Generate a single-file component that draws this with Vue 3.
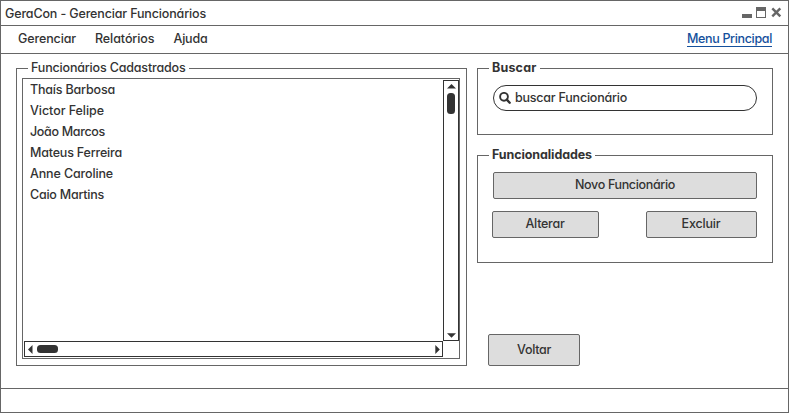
<script setup>
const menus = [
  { label: 'Gerenciar', width: 58 },
  { label: 'Relatórios', width: 59.5 },
  { label: 'Ajuda', width: 34 },
]
const employees = [
  { name: 'Thaís Barbosa', width: 85 },
  { name: 'Victor Felipe', width: 74 },
  { name: 'João Marcos', width: 75 },
  { name: 'Mateus Ferreira', width: 92 },
  { name: 'Anne Caroline', width: 83 },
  { name: 'Caio Martins', width: 74 },
]

// Spreads a label's letters so that it fills the given width in pixels.
const vFit = {
  mounted(el, { value }) {
    const natural = el.getBoundingClientRect().width
    el.style.letterSpacing = `${(value - natural) / el.textContent.length}px`
  },
}
</script>

<template>
  <div class="window">
    <header class="titlebar">
      <span v-fit="201" class="t">GeraCon - Gerenciar Funcionários</span>
      <svg class="controls" width="40" height="12" viewBox="0 0 40 12">
        <path d="M0 7h10v4H0z" fill="#666" />
        <path d="M14 0h10v11H14zM15 4v6h8V4z" fill="#666" fill-rule="evenodd" />
        <path d="M30.3 1.3l8 8M38.3 1.3l-8 8" stroke="#666" stroke-width="2.4" />
      </svg>
    </header>
    <nav class="menubar">
      <span v-for="m in menus" :key="m.label" v-fit="m.width" class="t">{{ m.label }}</span>
      <a class="link"><span v-fit="85" class="t">Menu Principal</span></a>
    </nav>
    <main class="content">
      <section class="group registered">
        <h2 class="legend"><span v-fit="154.5" class="t">Funcionários Cadastrados</span></h2>
        <div class="listbox">
          <ul class="list">
            <li v-for="e in employees" :key="e.name"><span v-fit="e.width" class="t">{{ e.name }}</span></li>
          </ul>
          <div class="vbar">
            <svg width="9" height="5" viewBox="0 0 9 5"><path d="M4.5 0L9 4.5H0z" /></svg>
            <i class="thumb"></i>
            <svg class="end" width="9" height="5" viewBox="0 0 9 5"><path d="M0 .3h9L4.5 4.8z" /></svg>
          </div>
          <div class="hbar">
            <svg width="5" height="9" viewBox="0 0 5 9"><path d="M0 4.5L4.5 0v9z" /></svg>
            <i class="thumb"></i>
            <svg class="end" width="5" height="9" viewBox="0 0 5 9"><path d="M.3 0v9l4.5-4.5z" /></svg>
          </div>
        </div>
      </section>
      <div class="side">
        <section class="group search-group">
          <h2 class="legend bold"><span v-fit="44.5" class="t">Buscar</span></h2>
          <div class="search">
            <svg width="12" height="12" viewBox="0 0 12 12" fill="none" stroke="#333">
              <circle cx="5" cy="4.8" r="3.9" stroke-width="1.9" />
              <path d="M7.8 7.6l2.9 3.1" stroke-width="2.4" stroke-linecap="round" />
            </svg>
            <span v-fit="112" class="t">buscar Funcionário</span>
          </div>
        </section>
        <section class="group actions">
          <h2 class="legend bold"><span v-fit="100" class="t">Funcionalidades</span></h2>
          <button class="btn new"><span v-fit="100" class="t">Novo Funcionário</span></button>
          <div class="pair">
            <button class="btn edit"><span v-fit="39" class="t">Alterar</span></button>
            <button class="btn remove"><span v-fit="39" class="t">Excluir</span></button>
          </div>
        </section>
        <button class="btn back"><span v-fit="34" class="t">Voltar</span></button>
      </div>
    </main>
    <footer class="status"></footer>
  </div>
</template>

<style scoped>
* { box-sizing: border-box; margin: 0; padding: 0; }
.window {
  width: 789px; height: 413px; border: 1px solid #666; background: #fff; color: #333;
  display: flex; flex-direction: column;
  font: 450 12.5px/16px Inter, "Open Sans", sans-serif;
  font-feature-settings: "cv11" 1;
}
svg { display: block; flex: none; }
.t { display: inline-block; white-space: nowrap; flex: none; }
.titlebar {
  height: 25px; border-bottom: 1px solid #666; padding: 1px 6px 0 4px;
  display: flex; align-items: center; justify-content: space-between;
}
.controls { margin-top: -1px; }
.menubar {
  height: 28px; border-bottom: 1px solid #666; padding: 5px 16px 0 17px;
  display: flex; align-items: flex-start; gap: 19px;
}
.link { margin-left: auto; height: 16px; color: #14509c; border-bottom: 1px solid #14509c; display: flex; line-height: 15px; }
.content { height: 334px; padding: 14px 15px 0; display: flex; gap: 10px; }
.group { border: 1px solid #666; }
.legend { width: max-content; height: 16px; margin: -9px 0 0 11px; padding: 0 3px; background: #fff; font-size: inherit; font-weight: 450; display: flex; }
.bold { font-weight: 700; }
.registered { width: 451px; height: 298px; padding: 0 6px 0 5px; }
.registered .legend { margin-left: 6px; }
.listbox {
  width: 438px; height: 281px; margin-top: 2px; border: 1px solid #666; padding: 1px;
  display: grid; grid-template-columns: 419px 16px; grid-template-rows: 261px 16px;
}
.list { list-style: none; padding: 2px 0 0 6px; }
.list li { height: 21px; display: flex; align-items: flex-start; }
.vbar, .hbar { border: 1px solid #333; display: flex; align-items: center; fill: #333; }
.vbar { flex-direction: column; padding: 3px 0 2px; }
.hbar { padding: 0 2px 0 3px; }
.end { margin: auto 0 0; }
.hbar .end { margin: 0 0 0 auto; }
.thumb { background: #333; border-radius: 3.5px; }
.vbar .thumb { width: 8px; height: 21px; margin-top: 4px; }
.hbar .thumb { width: 21px; height: 8px; margin-left: 4px; }
.side { width: 296px; display: flex; flex-direction: column; align-items: flex-start; }
.search-group { width: 296px; height: 67px; }
.search {
  width: 264px; height: 26px; margin: 9px 0 0 15px; padding-left: 5px; border: 1px solid #333; border-radius: 13px;
  display: flex; align-items: center; gap: 4px;
}
.actions { width: 296px; height: 108px; margin-top: 20px; padding-right: 15px; }
.btn {
  font: inherit; font-feature-settings: inherit; color: inherit; background: #ddd; border: 1px solid #666; border-radius: 2px;
  height: 27px; display: flex; justify-content: center; align-items: center; padding-bottom: 1px;
}
.new { width: 264px; margin: 9px 0 0 15px; }
.pair { display: flex; justify-content: space-between; margin: 12px 0 0 14px; }
.edit { width: 107px; padding-right: 1px; }
.remove { width: 111px; padding-right: 1px; }
.back { width: 92px; height: 32px; margin: 71px 0 0 11px; }
.status { flex: 1; border-top: 1px solid #666; }
</style>
